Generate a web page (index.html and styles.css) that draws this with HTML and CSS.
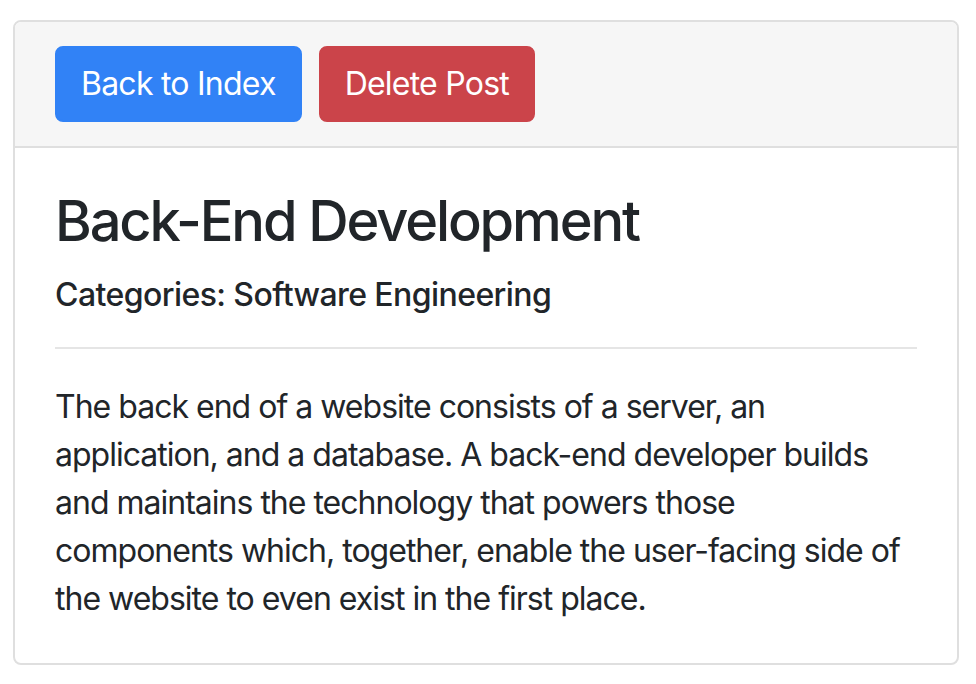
FILE: index.html
```html
<!DOCTYPE html>
<html lang="en">
<head>
<meta charset="utf-8">
<title>Back-End Development</title>
<link rel="stylesheet" href="styles.css">
</head>
<body>
<div class="card">
  <div class="card-header">
    <a class="btn btn-primary" href="#">Back to Index</a>
    <a class="btn btn-danger" href="#">Delete Post</a>
  </div>
  <div class="card-body">
    <h3 class="title">Back-End Development</h3>
    <h6 class="cats">Categories: Software Engineering</h6>
    <hr class="rule">
    <p class="card-text">The back end of a website consists of a server, an application, and a database. A back-end developer builds and maintains the technology that powers those components which, together, enable the user-facing side of the website to even exist in the first place.</p>
  </div>
</div>
</body>
</html>
```
FILE: styles.css
```css
html, body {
  margin: 0;
  padding: 0;
  background: #ffffff;
}
body {
  padding: 20px 17px 20px 13px;
  font-family: Inter, "Noto Sans", sans-serif;
  color: #212529;
  font-size: 32px;
  line-height: 48px;
  letter-spacing: -0.031em;
}
.card {
  border: 2px solid #dfdfdf;
  border-radius: 8px;
  background: #fff;
  overflow: hidden;
}
.card-header {
  background: #f6f6f6;
  border-bottom: 2px solid #dfdfdf;
  padding: 24px 40px;
  display: flex;
  gap: 17px;
}
.btn {
  display: inline-block;
  padding: 12px 24px;
  border: 2px solid transparent;
  border-radius: 8px;
  color: #fff;
  text-decoration: none;
  font-size: 32px;
  line-height: 48px;
  font-weight: 400;
  letter-spacing: -0.024em;
}
.btn-primary {
  background: #3182f6;
  border-color: #3182f6;
}
.btn-danger {
  background: #cb444a;
  border-color: #cb444a;
}
.card-body {
  padding: 40px;
}
.title {
  margin: 0 0 21px 0;
  font-size: 56px;
  line-height: 67px;
  font-weight: 500;
  letter-spacing: -0.038em;
}
.cats {
  margin: 0;
  font-size: 32px;
  line-height: 38px;
  font-weight: 500;
  letter-spacing: -0.018em;
}
.rule {
  margin: 33px 0 34px 0;
  border: 0;
  border-top: 2px solid #e5e5e5;
}
.card-text {
  margin: 0;
}
```
